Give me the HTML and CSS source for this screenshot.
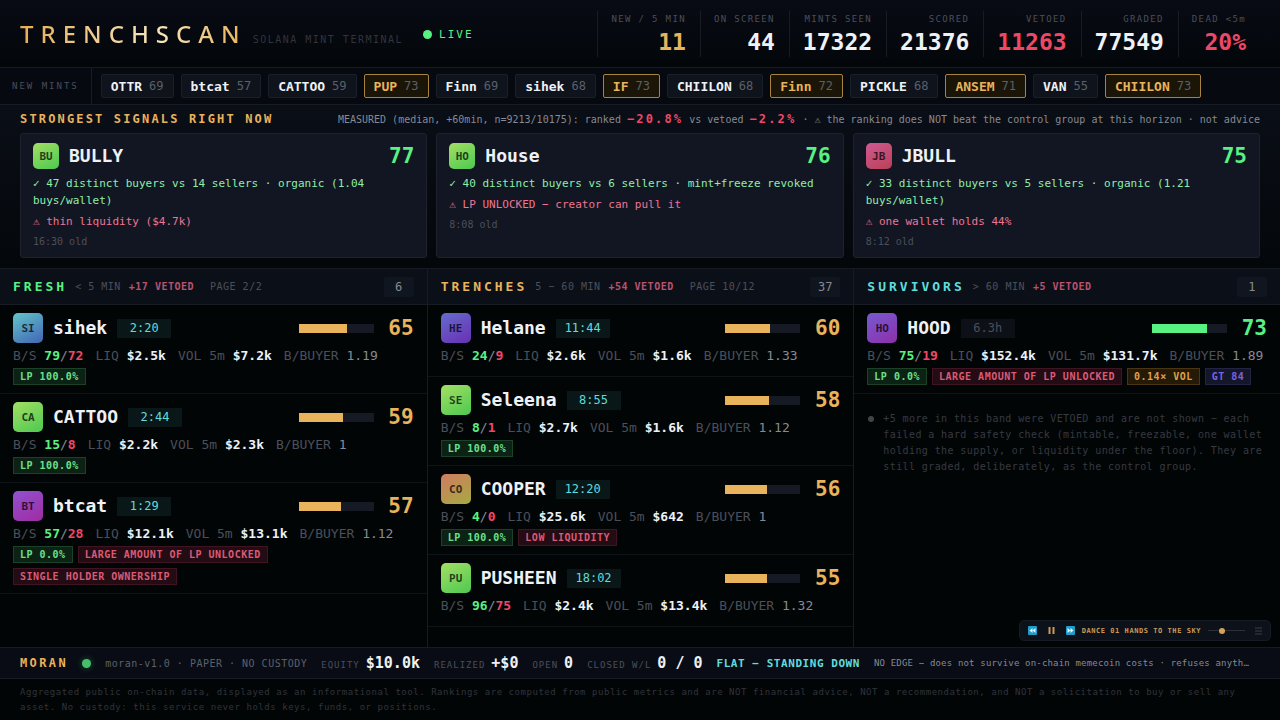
FILE: index.html
```html
<!DOCTYPE html>
<html lang="en">
<head>
<meta charset="utf-8">
<meta name="viewport" content="width=device-width, initial-scale=1">
<title>Trenchscan</title>
<link rel="stylesheet" href="styles.css">
</head>
<body>
<header class="top">
  <h1 class="logo">TRENCHSCAN</h1>
  <span class="tagline">SOLANA MINT TERMINAL</span>
  <span class="live"><i class="dot"></i>LIVE</span>
  <dl class="stats">
    <div class="stat"><dt>NEW / 5 MIN</dt><dd class="gold">11</dd></div>
    <div class="stat"><dt>ON SCREEN</dt><dd>44</dd></div>
    <div class="stat"><dt>MINTS SEEN</dt><dd>17322</dd></div>
    <div class="stat"><dt>SCORED</dt><dd>21376</dd></div>
    <div class="stat"><dt>VETOED</dt><dd class="red">11263</dd></div>
    <div class="stat"><dt>GRADED</dt><dd>77549</dd></div>
    <div class="stat"><dt>DEAD &lt;5m</dt><dd class="red">20%</dd></div>
  </dl>
</header>

<section class="ticker">
  <h2 class="ticker-label">NEW MINTS</h2>
  <ul class="mints">
    <li class="mint"><b>OTTR</b><span>69</span></li>
    <li class="mint"><b>btcat</b><span>57</span></li>
    <li class="mint"><b>CATTOO</b><span>59</span></li>
    <li class="mint hot"><b>PUP</b><span>73</span></li>
    <li class="mint"><b>Finn</b><span>69</span></li>
    <li class="mint"><b>sihek</b><span>68</span></li>
    <li class="mint hot"><b>IF</b><span>73</span></li>
    <li class="mint"><b>CHIILON</b><span>68</span></li>
    <li class="mint hot"><b>Finn</b><span>72</span></li>
    <li class="mint"><b>PICKLE</b><span>68</span></li>
    <li class="mint hot"><b>ANSEM</b><span>71</span></li>
    <li class="mint"><b>VAN</b><span>55</span></li>
    <li class="mint hot"><b>CHIILON</b><span>73</span></li>
  </ul>
</section>

<section class="signals">
  <div class="signals-head">
    <h2 class="signals-title">STRONGEST SIGNALS RIGHT NOW</h2>
    <p class="measured">MEASURED (median, +60min, n=9213/10175): ranked <b>−20.8%</b> vs vetoed <b>−2.2%</b> · ⚠ the ranking does NOT beat the control group at this horizon · not advice</p>
  </div>
  <div class="cards">
    <article class="card">
      <div class="card-head"><span class="avatar small lime">BU</span><h3 class="name">BULLY</h3><span class="score green">77</span></div>
      <p class="good">✓ 47 distinct buyers vs 14 sellers · organic (1.04 buys/wallet)</p>
      <p class="bad">⚠ thin liquidity ($4.7k)</p>
      <p class="old">16:30 old</p>
    </article>
    <article class="card">
      <div class="card-head"><span class="avatar small lime">HO</span><h3 class="name">House</h3><span class="score green">76</span></div>
      <p class="good">✓ 40 distinct buyers vs 6 sellers · mint+freeze revoked</p>
      <p class="bad">⚠ LP UNLOCKED − creator can pull it</p>
      <p class="old">8:08 old</p>
    </article>
    <article class="card">
      <div class="card-head"><span class="avatar small rose">JB</span><h3 class="name">JBULL</h3><span class="score green">75</span></div>
      <p class="good">✓ 33 distinct buyers vs 5 sellers · organic (1.21 buys/wallet)</p>
      <p class="bad">⚠ one wallet holds 44%</p>
      <p class="old">8:12 old</p>
    </article>
  </div>
</section>

<main class="board">
  <section class="column">
    <header class="column-head">
      <h2 class="band green">FRESH</h2><span class="range">&lt; 5 MIN</span><span class="vetoed">+17 VETOED</span><span class="page">PAGE 2/2</span><span class="count">6</span>
    </header>
    <article class="row">
      <div class="row-head"><span class="avatar sky">SI</span><h3 class="name">sihek</h3><span class="age">2:20</span><span class="bar"><i style="width:65%"></i></span><span class="score gold">65</span></div>
      <p class="facts"><span>B/S <b class="green">79</b><em>/</em><b class="red">72</b></span><span>LIQ <b>$2.5k</b></span><span>VOL 5m <b>$7.2k</b></span><span>B/BUYER <em>1.19</em></span></p>
      <div class="tags"><span class="tag ok">LP 100.0%</span></div>
    </article>
    <article class="row">
      <div class="row-head"><span class="avatar lime">CA</span><h3 class="name">CATTOO</h3><span class="age">2:44</span><span class="bar"><i style="width:59%"></i></span><span class="score gold">59</span></div>
      <p class="facts"><span>B/S <b class="green">15</b><em>/</em><b class="red">8</b></span><span>LIQ <b>$2.2k</b></span><span>VOL 5m <b>$2.3k</b></span><span>B/BUYER <em>1</em></span></p>
      <div class="tags"><span class="tag ok">LP 100.0%</span></div>
    </article>
    <article class="row">
      <div class="row-head"><span class="avatar magenta">BT</span><h3 class="name">btcat</h3><span class="age">1:29</span><span class="bar"><i style="width:57%"></i></span><span class="score gold">57</span></div>
      <p class="facts"><span>B/S <b class="green">57</b><em>/</em><b class="red">28</b></span><span>LIQ <b>$12.1k</b></span><span>VOL 5m <b>$13.1k</b></span><span>B/BUYER <em>1.12</em></span></p>
      <div class="tags"><span class="tag ok">LP 0.0%</span><span class="tag risk">LARGE AMOUNT OF LP UNLOCKED</span><span class="tag risk">SINGLE HOLDER OWNERSHIP</span></div>
    </article>
  </section>

  <section class="column">
    <header class="column-head">
      <h2 class="band gold">TRENCHES</h2><span class="range">5 − 60 MIN</span><span class="vetoed">+54 VETOED</span><span class="page">PAGE 10/12</span><span class="count">37</span>
    </header>
    <article class="row">
      <div class="row-head"><span class="avatar indigo">HE</span><h3 class="name">Helane</h3><span class="age">11:44</span><span class="bar"><i style="width:60%"></i></span><span class="score gold">60</span></div>
      <p class="facts"><span>B/S <b class="green">24</b><em>/</em><b class="red">9</b></span><span>LIQ <b>$2.6k</b></span><span>VOL 5m <b>$1.6k</b></span><span>B/BUYER <em>1.33</em></span></p>
      <div class="tags"></div>
    </article>
    <article class="row">
      <div class="row-head"><span class="avatar lime">SE</span><h3 class="name">Seleena</h3><span class="age">8:55</span><span class="bar"><i style="width:58%"></i></span><span class="score gold">58</span></div>
      <p class="facts"><span>B/S <b class="green">8</b><em>/</em><b class="red">1</b></span><span>LIQ <b>$2.7k</b></span><span>VOL 5m <b>$1.6k</b></span><span>B/BUYER <em>1.12</em></span></p>
      <div class="tags"><span class="tag ok">LP 100.0%</span></div>
    </article>
    <article class="row">
      <div class="row-head"><span class="avatar clay">CO</span><h3 class="name">COOPER</h3><span class="age">12:20</span><span class="bar"><i style="width:56%"></i></span><span class="score gold">56</span></div>
      <p class="facts"><span>B/S <b class="green">4</b><em>/</em><b class="red">0</b></span><span>LIQ <b>$25.6k</b></span><span>VOL 5m <b>$642</b></span><span>B/BUYER <em>1</em></span></p>
      <div class="tags"><span class="tag ok">LP 100.0%</span><span class="tag risk">LOW LIQUIDITY</span></div>
    </article>
    <article class="row">
      <div class="row-head"><span class="avatar lime">PU</span><h3 class="name">PUSHEEN</h3><span class="age">18:02</span><span class="bar"><i style="width:55%"></i></span><span class="score gold">55</span></div>
      <p class="facts"><span>B/S <b class="green">96</b><em>/</em><b class="red">75</b></span><span>LIQ <b>$2.4k</b></span><span>VOL 5m <b>$13.4k</b></span><span>B/BUYER <em>1.32</em></span></p>
      <div class="tags"></div>
    </article>
  </section>

  <section class="column">
    <header class="column-head">
      <h2 class="band cyan">SURVIVORS</h2><span class="range">&gt; 60 MIN</span><span class="vetoed">+5 VETOED</span><span class="count">1</span>
    </header>
    <article class="row">
      <div class="row-head"><span class="avatar violet">HO</span><h3 class="name">HOOD</h3><span class="age aged">6.3h</span><span class="bar strong"><i style="width:73%"></i></span><span class="score green">73</span></div>
      <p class="facts"><span>B/S <b class="green">75</b><em>/</em><b class="red">19</b></span><span>LIQ <b>$152.4k</b></span><span>VOL 5m <b>$131.7k</b></span><span>B/BUYER <em>1.89</em></span></p>
      <div class="tags"><span class="tag ok">LP 0.0%</span><span class="tag risk">LARGE AMOUNT OF LP UNLOCKED</span><span class="tag warn">0.14× VOL</span><span class="tag info">GT 84</span></div>
    </article>
    <div class="note"><i class="bullet"></i><p>+5 more in this band were VETOED and are not shown − each failed a hard safety check (mintable, freezable, one wallet holding the supply, or liquidity under the floor). They are still graded, deliberately, as the control group.</p></div>
  </section>

  <div class="player">
    <button type="button" aria-label="Previous track"><svg width="9" height="9" viewBox="0 0 18 18"><rect width="18" height="18" rx="2" fill="#1d9dcb"/><path d="M9 4v10L3 9zM15 4v10L9 9z" fill="#e6f6fc"/></svg></button>
    <button type="button" aria-label="Pause"><svg width="9" height="9" viewBox="0 0 18 18"><path d="M3 2h4v14H3zM11 2h4v14h-4z" fill="#c99a55"/></svg></button>
    <button type="button" aria-label="Next track"><svg width="9" height="9" viewBox="0 0 18 18"><rect width="18" height="18" rx="2" fill="#1d9dcb"/><path d="M3 4v10l6-5zM9 4v10l6-5z" fill="#e6f6fc"/></svg></button>
    <span class="track">DANCE 01 HANDS TO THE SKY</span>
    <input class="volume" type="range" min="0" max="100" value="35" aria-label="Volume">
    <button type="button" class="list" aria-label="Playlist"><svg width="7" height="8" viewBox="0 0 7 8"><path d="M0 1h7M0 4h7M0 7h7" stroke="#3b3f48"/></svg></button>
  </div>
</main>

<section class="agent">
  <h2 class="agent-name">MORAN</h2>
  <i class="dot dim"></i>
  <span class="agent-mode">moran-v1.0 · PAPER · NO CUSTODY</span>
  <dl class="book">
    <div><dt>EQUITY</dt><dd>$10.0k</dd></div>
    <div><dt>REALIZED</dt><dd>+$0</dd></div>
    <div><dt>OPEN</dt><dd>0</dd></div>
    <div><dt>CLOSED W/L</dt><dd>0 / 0</dd></div>
  </dl>
  <strong class="state">FLAT − STANDING DOWN</strong>
  <span class="reason">NO EDGE − does not survive on-chain memecoin costs · refuses anyth…</span>
</section>

<footer class="legal">Aggregated public on-chain data, displayed as an informational tool. Rankings are computed from public metrics and are NOT financial advice, NOT a recommendation, and NOT a solicitation to buy or sell any asset. No custody: this service never holds keys, funds, or positions.</footer>
</body>
</html>
```
FILE: styles.css
```css
:root {
  --gold: #e9b35c;
  --green: #58f283;
  --red: #f04767;
  --cyan: #5fdcdc;
  --text: #eef1f6;
  --mid: #858a94;
  --dim: #4b4f59;
  --faint: #30343c;
  --line: #171c24;
}

* { box-sizing: border-box; }

body {
  margin: 0;
  min-height: 100vh;
  display: flex;
  flex-direction: column;
  background: #020506;
  color: var(--text);
  font-family: "DejaVu Sans Mono", "Liberation Mono", monospace;
  font-size: 13px;
}

h1, h2, h3, p, dl, dd, ul { margin: 0; padding: 0; }
ul { list-style: none; }
em { font-style: normal; }
b { font-weight: 700; }

.gold { color: var(--gold); }
.green { color: var(--green); }
.red { color: var(--red); }
.cyan { color: var(--cyan); }

/* Header */
.top {
  display: flex;
  align-items: center;
  padding: 11px 20px 10px;
  border-bottom: 1px solid var(--line);
  background: linear-gradient(#080b14, #030609);
}
.logo {
  font: 500 24px/32px "Noto Sans", "Open Sans", sans-serif;
  letter-spacing: 7px;
  background: linear-gradient(90deg, #e6ad55, #f8e6bd 60%, #e9b35c);
  background-clip: text;
  -webkit-background-clip: text;
  color: transparent;
}
.tagline {
  margin: 10px 20px 0 6px;
  color: var(--faint);
  font-size: 10px;
  letter-spacing: 0.15em;
}
.live {
  display: flex;
  align-items: center;
  gap: 7px;
  color: var(--green);
  font-size: 11px;
  letter-spacing: 2px;
}
.dot {
  width: 9px;
  height: 9px;
  border-radius: 50%;
  background: var(--green);
}
.stats { display: flex; margin-left: auto; }
.stat {
  padding: 0 14px 0 13px;
  border-left: 1px solid var(--line);
  text-align: right;
}
.stat dt {
  color: var(--dim);
  font-size: 9px;
  line-height: 16px;
  letter-spacing: 0.15em;
}
.stat dd { font-size: 23px; font-weight: 700; line-height: 30px; }

/* Ticker */
.ticker {
  display: flex;
  border-bottom: 1px solid var(--line);
  background: #060910;
}
.ticker-label {
  display: flex;
  align-items: center;
  padding: 0 12px;
  border-right: 1px solid var(--line);
  color: var(--dim);
  font-size: 9px;
  font-weight: 400;
  letter-spacing: 2px;
}
.mints { display: flex; gap: 7px; padding: 6px 9px; overflow: hidden; }
.mint {
  display: flex;
  align-items: center;
  gap: 7px;
  height: 24px;
  padding: 0 9px;
  border: 1px solid #1a202a;
  border-radius: 2px;
  background: #0e131c;
}
.mint span { color: #5b606a; font-size: 12px; }
.mint.hot { border-color: #a8823f; background: #1a1506; color: var(--gold); }

/* Strongest signals */
.signals {
  padding: 5px 20px 10px;
  border-bottom: 1px solid var(--line);
  background: linear-gradient(#0a0e17, #04070a);
}
.signals-head {
  display: flex;
  align-items: baseline;
  justify-content: space-between;
  line-height: 18px;
  margin-bottom: 4px;
}
.signals-title { color: var(--gold); font-size: 12px; letter-spacing: 0.18em; }
.measured { color: var(--mid); font-size: 10px; }
.measured b { color: var(--red); font-size: 12px; letter-spacing: 0.18em; }
.cards { display: grid; grid-template-columns: repeat(3, 1fr); gap: 9px; }
.card {
  padding: 9px 12px 7px;
  border: 1px solid #1d222d;
  border-radius: 3px;
  background: #121622;
  font-size: 11px;
  line-height: 17px;
}
.card-head, .row-head { display: flex; align-items: center; gap: 10px; }
.card-head { margin-bottom: 6px; }
.name { font-size: 18px; line-height: 24px; }
.score { min-width: 30px; font-size: 21px; font-weight: 700; line-height: 24px; text-align: right; }
.card-head .score { margin-left: auto; }
.good { color: #8fedaa; }
.bad { margin-top: 4px; color: #ee7593; }
.old { margin-top: 3px; color: var(--dim); font-size: 10px; }

.avatar {
  display: grid;
  place-items: center;
  width: 30px;
  height: 30px;
  border-radius: 5px;
  color: rgb(0 0 0 / 72%);
  font-size: 11px;
  font-weight: 700;
}
.avatar.small { width: 26px; height: 26px; }
.lime { background: linear-gradient(150deg, #a3e063, #4dc851); }
.rose { background: linear-gradient(150deg, #cf5a92, #ba4056); }
.sky { background: linear-gradient(150deg, #63c5ca, #4264b4); }
.magenta { background: linear-gradient(150deg, #9152d0, #9f2ca2); }
.indigo { background: linear-gradient(150deg, #656ccc, #692fb4); }
.clay { background: linear-gradient(150deg, #d07b62, #a5ab40); }
.violet { background: linear-gradient(150deg, #765ad0, #8e2faa); }

/* Board */
.board {
  position: relative;
  flex: 1;
  display: grid;
  grid-template-columns: repeat(3, 1fr);
}
.column + .column { border-left: 1px solid var(--line); }
.column-head {
  display: flex;
  align-items: center;
  gap: 8px;
  height: 36px;
  padding: 0 13px;
  border-bottom: 1px solid var(--line);
  background: #0b1018;
  color: var(--dim);
  font-size: 10px;
  letter-spacing: 0.05em;
}
.band { font-size: 13px; letter-spacing: 3px; }
.vetoed { color: #b9526f; font-weight: 700; }
.page { margin-left: 8px; }
.count {
  min-width: 30px;
  margin-left: auto;
  border-radius: 2px;
  background: #10161f;
  color: var(--mid);
  font-size: 12px;
  line-height: 20px;
  letter-spacing: 0;
  text-align: center;
}
.row { padding: 8px 13px; border-bottom: 1px solid #0f1418; }
.age {
  width: 54px;
  background: #0a1719;
  color: var(--cyan);
  font-size: 12px;
  line-height: 19px;
  text-align: center;
}
.age.aged { background: #0d1117; color: var(--dim); }
.bar { width: 75px; height: 9px; margin-left: auto; background: #151a24; }
.bar i { display: block; height: 100%; background: var(--gold); }
.bar.strong i { background: var(--green); }
.facts {
  display: flex;
  gap: 12px;
  margin: 4px 0 3px;
  color: var(--dim);
  line-height: 18px;
  white-space: nowrap;
}
.facts em { color: var(--mid); }
.facts b:not([class]) { color: var(--text); }
.tags { display: flex; flex-wrap: wrap; gap: 5px; }
.tag {
  padding: 0 6px;
  border: 1px solid;
  font-size: 10px;
  font-weight: 700;
  line-height: 15px;
  letter-spacing: 0.05em;
}
.ok { border-color: #1b4229; background: #0c2214; color: #6be08c; }
.risk { border-color: #3f1521; background: #230c14; color: #db5a76; }
.warn { border-color: #4a3512; background: #251a08; color: #dda047; }
.info { border-color: #232444; background: #14162a; color: #7d62e0; }

.note {
  display: flex;
  gap: 9px;
  padding: 17px 13px;
  color: #363a41;
  font-size: 10px;
  line-height: 16px;
  letter-spacing: 0.04em;
}
.bullet {
  flex: none;
  width: 6px;
  height: 6px;
  margin: 5px 0 0 1px;
  border-radius: 50%;
  background: #41454a;
}

/* Music player */
.player {
  position: absolute;
  right: 9px;
  bottom: 6px;
  display: flex;
  align-items: center;
  gap: 10px;
  height: 21px;
  padding: 0 8px;
  border: 1px solid #171b24;
  border-radius: 5px;
  background: #0d1119;
}
.player button { display: flex; padding: 0; border: 0; background: none; }
.track {
  margin: 0 -3px;
  color: #c99a55;
  font-size: 7px;
  font-weight: 700;
  letter-spacing: 0.08em;
}
.volume {
  width: 37px;
  height: 7px;
  margin: 0;
  appearance: none;
  background: linear-gradient(#2c2f36, #2c2f36) center / 100% 1px no-repeat;
}
.volume::-webkit-slider-thumb {
  appearance: none;
  width: 6px;
  height: 6px;
  border-radius: 50%;
  background: #d6a258;
}

/* Agent strip */
.agent {
  display: flex;
  align-items: center;
  gap: 14px;
  height: 32px;
  padding: 0 20px;
  border-top: 1px solid var(--line);
  border-bottom: 1px solid var(--line);
  background: #090c15;
  white-space: nowrap;
}
.agent-name { color: var(--gold); font-size: 12px; letter-spacing: 0.2em; }
.dot.dim { flex: none; background: #45c06a; box-shadow: 0 0 6px #1d5a34; }
.agent-mode { color: #5b606a; font-size: 10px; letter-spacing: 0.05em; }
.book { display: flex; gap: 14px; }
.book div { display: flex; align-items: baseline; gap: 6px; }
.book dt { color: var(--dim); font-size: 9px; letter-spacing: 1px; }
.book dd { font-size: 15px; font-weight: 700; }
.state { color: var(--cyan); font-size: 11px; letter-spacing: 0.05em; }
.reason { color: var(--mid); font-size: 9px; letter-spacing: 0.02em; }

.legal {
  padding: 6px 20px 5px;
  color: var(--faint);
  font-size: 9px;
  line-height: 15px;
  letter-spacing: 0.06em;
}
```
